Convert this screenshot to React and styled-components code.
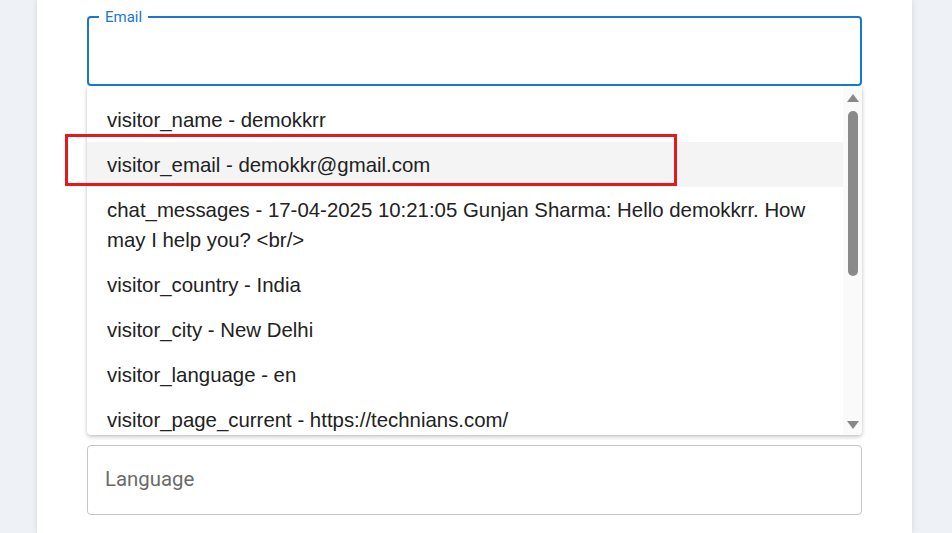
import React from 'react'
import styled, { createGlobalStyle } from 'styled-components'

const GlobalStyle = createGlobalStyle`
  body {
    margin: 0;
    background: #eef1f6;
    font-family: "Liberation Sans", Arial, sans-serif;
  }
`

const Page = styled.div`
  height: 533px;
  overflow: hidden;
  padding-left: 37px;
`

const Panel = styled.div`
  width: 875px;
  height: 533px;
  background: #fff;
  box-shadow: 0 0 6px rgba(0, 0, 0, 0.12);
  box-sizing: border-box;
  padding: 16px 50px 0;
  display: flex;
  flex-direction: column;
`

const Field = styled.div`
  position: relative;
  height: 70px;
  box-sizing: border-box;
  border: ${({ $focused }) => ($focused ? '2px solid #1976d2' : '1px solid #c4c4c4')};
  border-radius: 4px;
  display: flex;
  align-items: center;
  padding: 0 17px 3px;
  margin-top: ${({ $gap }) => $gap || 0}px;
`

const FloatLabel = styled.span`
  position: absolute;
  top: -10px;
  left: 10px;
  padding: 0 6px;
  background: #fff;
  color: #1976d2;
  font-family: Roboto, sans-serif;
  font-size: 15px;
  line-height: 18px;
`

const Placeholder = styled.span`
  color: #6b6b6b;
  font-family: Roboto, sans-serif;
  font-size: 20.4px;
`

const Dropdown = styled.div`
  height: 349px;
  display: flex;
  background: #fff;
  border-radius: 0 0 4px 4px;
  box-shadow: 0 2px 4px rgba(0, 0, 0, 0.22), 0 0 2px rgba(0, 0, 0, 0.08);
  overflow: hidden;
`

const List = styled.ul`
  flex: 1;
  list-style: none;
  margin: 0;
  padding: 11px 0 0;
  overflow: hidden;
`

const Option = styled.li`
  padding: 7.5px 16px 7.5px 20px;
  font-size: 20.4px;
  line-height: 30px;
  color: #222;
  background: ${({ $active }) => ($active ? '#f4f4f4' : 'transparent')};
`

const Scrollbar = styled.div`
  width: 19px;
  background: #fafafa;
  display: flex;
  flex-direction: column;
  align-items: center;
  padding-top: 8px;
  box-sizing: border-box;
`

const Arrow = styled.div`
  width: 0;
  height: 0;
  border-left: 6px solid transparent;
  border-right: 6px solid transparent;
  ${({ $down }) => ($down ? 'border-top: 8px solid #888;' : 'border-bottom: 8px solid #888;')}
`

const Thumb = styled.div`
  width: 10px;
  height: 165px;
  margin-top: 9px;
  border-radius: 5px;
  background: #8a8a8a;
`

const Spacer = styled.div`
  flex: 1;
`

const BottomArrow = styled.div`
  padding-bottom: 6px;
`

const Highlight = styled.div`
  position: absolute;
  left: 65px;
  top: 134px;
  width: 612px;
  height: 52px;
  box-sizing: border-box;
  border: 3px solid #e3191e;
  pointer-events: none;
`

const options = [
  'visitor_name - demokkrr',
  'visitor_email - demokkr@gmail.com',
  'chat_messages - 17-04-2025 10:21:05 Gunjan Sharma: Hello demokkrr. How may I help you? <br/>',
  'visitor_country - India',
  'visitor_city - New Delhi',
  'visitor_language - en',
  'visitor_page_current - https://technians.com/',
]

const App = () => {
  return (
    <>
      <GlobalStyle />
      <Page>
        <Panel>
          <Field $focused>
            <FloatLabel>Email</FloatLabel>
          </Field>
          <Dropdown>
            <List>
              {options.map((o, i) => (
                <Option key={o} $active={i === 1}>{o}</Option>
              ))}
            </List>
            <Scrollbar>
              <Arrow />
              <Thumb />
              <Spacer />
              <BottomArrow><Arrow $down /></BottomArrow>
            </Scrollbar>
          </Dropdown>
          <Field $gap={10}>
            <Placeholder>Language</Placeholder>
          </Field>
        </Panel>
      </Page>
      <Highlight />
    </>
  )
}

export default App
